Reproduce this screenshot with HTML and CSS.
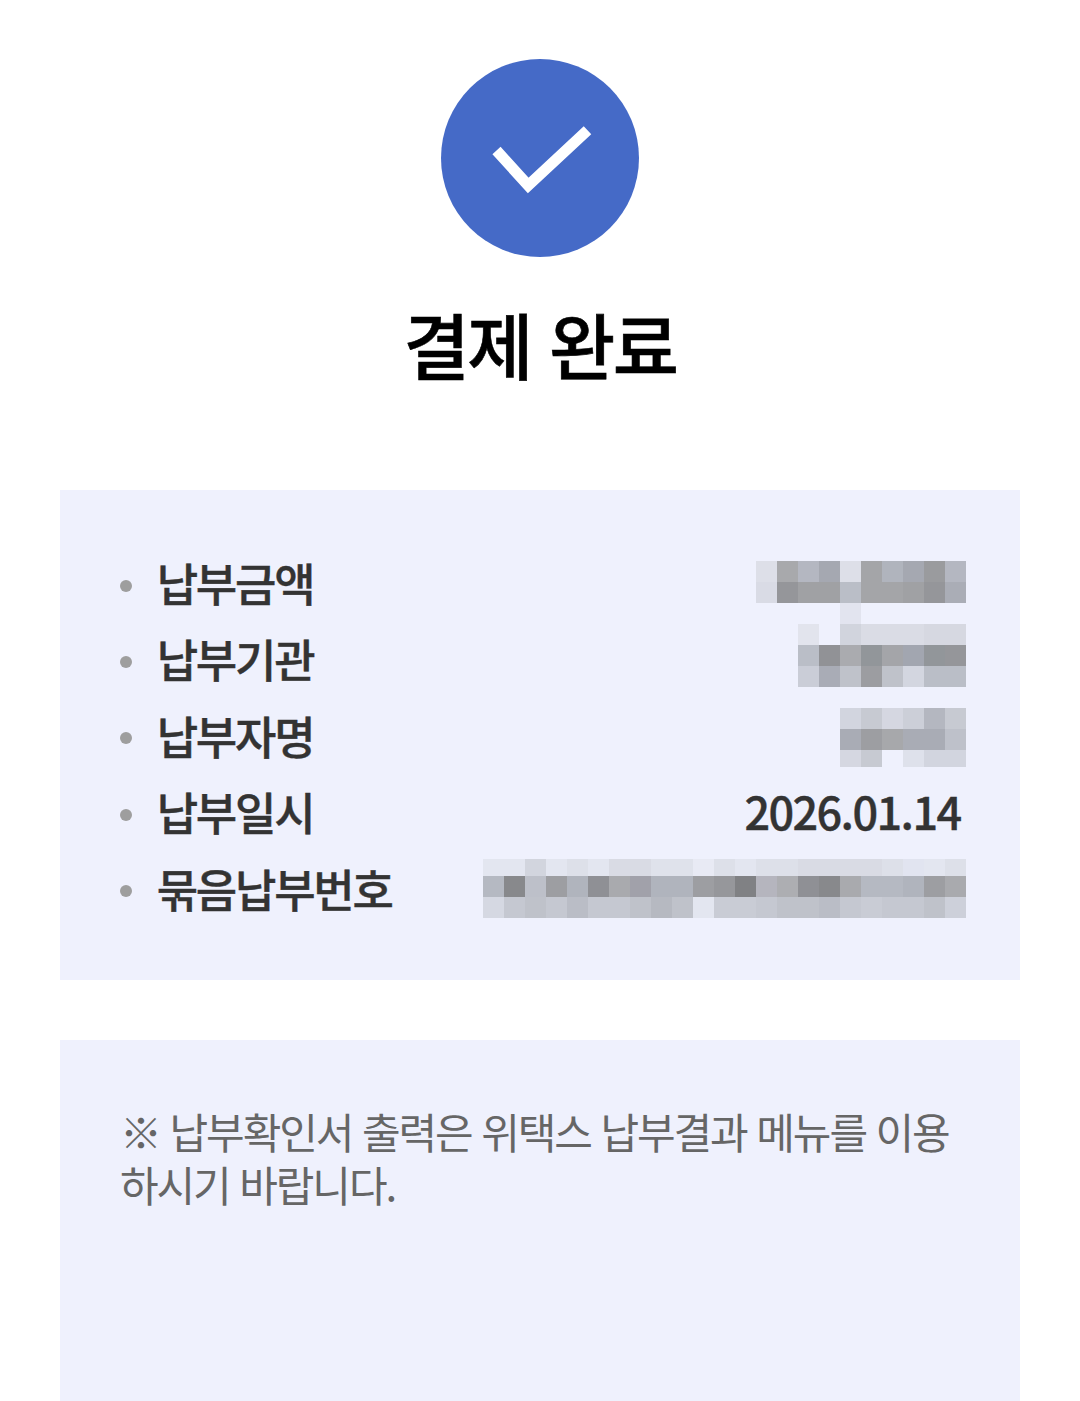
FILE: index.html
```html
<!DOCTYPE html>
<html lang="ko">
<head>
    <meta charset="utf-8">
    <title>결제 완료</title>
    <link rel="stylesheet" href="styles.css">
</head>
<body>
    <header class="result">
        <svg class="result-icon" width="198" height="198" viewBox="0 0 198 198">
            <circle cx="99" cy="99" r="99" fill="#456ac7"/>
            <path d="M55.5 91.5L87.2 126.5L146.5 71.3" fill="none" stroke="#fff" stroke-width="11"/>
        </svg>
        <h1>결제 완료</h1>
    </header>
    <section class="box">
        <ul class="pay-list">
            <li>
                <span class="label">납부금액</span>
                <svg class="mask amount" width="210" height="63" viewBox="0 0 10 3">
                    <path fill="#dddfe8" d="M0 0h1v1h-1zM4 0h1v1h-1z"/>
                    <path fill="#a8a9ac" d="M1 0h1v1h-1z"/>
                    <path fill="#b4b7c1" d="M2 0h1v1h-1zM9 0h1v1h-1z"/>
                    <path fill="#a5a8b1" d="M3 0h1v1h-1zM7 0h1v1h-1z"/>
                    <path fill="#a4a5a8" d="M5 0h1v2h-1zM6 1h1v1h-1z"/>
                    <path fill="#b0b4bd" d="M6 0h1v1h-1z"/>
                    <path fill="#9a9b9e" d="M8 0h1v1h-1z"/>
                    <path fill="#d9dbe5" d="M0 1h1v1h-1z"/>
                    <path fill="#95969a" d="M1 1h1v1h-1zM8 1h1v1h-1z"/>
                    <path fill="#a0a1a4" d="M2 1h2v1h-2zM7 1h1v1h-1z"/>
                    <path fill="#babec7" d="M4 1h1v1h-1z"/>
                    <path fill="#aaadb6" d="M9 1h1v1h-1z"/>
                    <path fill="#e2e4ef" d="M4 2h1v1h-1z"/>
                </svg>
            </li>
            <li>
                <span class="label">납부기관</span>
                <svg class="mask agency" width="168" height="63" viewBox="0 0 8 3">
                    <path fill="#e2e4ed" d="M0 0h1v1h-1z"/>
                    <path fill="#d1d4dd" d="M2 0h1v1h-1z"/>
                    <path fill="#dadce5" d="M3 0h3v1h-3z"/>
                    <path fill="#d6d8e1" d="M6 0h2v1h-2z"/>
                    <path fill="#babec7" d="M0 1h1v1h-1zM6 2h2v1h-2z"/>
                    <path fill="#919296" d="M1 1h1v1h-1z"/>
                    <path fill="#aaabaf" d="M2 1h1v1h-1z"/>
                    <path fill="#92969a" d="M3 1h1v1h-1zM6 1h1v1h-1z"/>
                    <path fill="#a4a5a9" d="M4 1h1v1h-1z"/>
                    <path fill="#a2a6b0" d="M5 1h1v1h-1z"/>
                    <path fill="#95969a" d="M7 1h1v1h-1z"/>
                    <path fill="#cacdd7" d="M0 2h1v1h-1z"/>
                    <path fill="#a9acb6" d="M1 2h1v1h-1z"/>
                    <path fill="#bfc2ca" d="M2 2h1v1h-1zM4 2h1v1h-1z"/>
                    <path fill="#9c9da1" d="M3 2h1v1h-1z"/>
                    <path fill="#d3d6e0" d="M5 2h1v1h-1z"/>
                </svg>
            </li>
            <li>
                <span class="label">납부자명</span>
                <svg class="mask payer" width="126" height="59" viewBox="0 0 126 59">
                    <path fill="#d2d5df" d="M0 0h21v21h-21zM84 42h42v17h-42z"/>
                    <path fill="#c7cad2" d="M21 0h21v21h-21zM105 0h21v21h-21zM21 42h21v17h-21z"/>
                    <path fill="#d5d7e1" d="M42 0h21v21h-21zM0 42h21v17h-21z"/>
                    <path fill="#cccfd8" d="M63 0h21v21h-21z"/>
                    <path fill="#b4b7c0" d="M84 0h21v21h-21z"/>
                    <path fill="#a9acb5" d="M0 21h21v21h-21zM63 21h42v21h-42z"/>
                    <path fill="#9d9ea2" d="M21 21h21v21h-21z"/>
                    <path fill="#a7a8ab" d="M42 21h21v21h-21z"/>
                    <path fill="#bec1ca" d="M105 21h21v21h-21z"/>
                    <path fill="#dee1eb" d="M63 42h21v17h-21z"/>
                </svg>
            </li>
            <li>
                <span class="label">납부일시</span>
                <span class="value">2026.01.14</span>
            </li>
            <li>
                <span class="label">묶음납부번호</span>
                <svg class="mask number" width="483" height="59" viewBox="0 0 483 59">
                    <!-- top -->
                    <path fill="#e3e6f0" d="M0 0h483v17h-483z"/>
                    <path fill="#d2d5de" d="M42 0h21v17h-21z"/>
                    <path fill="#dde0e9" d="M84 0h21v17h-21zM231 0h21v17h-21zM273 0h42v17h-42zM399 0h21v17h-21zM462 0h21v17h-21z"/>
                    <path fill="#d9dbe4" d="M126 0h42v17h-42zM315 0h84v17h-84z"/>
                    <path fill="#dfe2eb" d="M168 0h42v17h-42z"/>
                    <path fill="#e8eaf4" d="M210 0h21v17h-21z"/>
                    <path fill="#e1e4f0" d="M420 0h21v17h-21z"/>
                    <!-- middle -->
                    <path fill="#b5b9c2" d="M0 17h483v21h-483z"/>
                    <path fill="#88898c" d="M21 17h21v21h-21zM336 17h21v21h-21z"/>
                    <path fill="#bdc0c9" d="M42 17h21v21h-21z"/>
                    <path fill="#9d9ea2" d="M63 17h21v21h-21zM210 17h21v21h-21zM441 17h21v21h-21z"/>
                    <path fill="#b0b4bd" d="M84 17h21v21h-21zM168 17h42v21h-42zM420 17h21v21h-21z"/>
                    <path fill="#8f9095" d="M105 17h21v21h-21zM315 17h21v21h-21z"/>
                    <path fill="#a9aaae" d="M126 17h21v21h-21zM357 17h21v21h-21zM462 17h21v21h-21z"/>
                    <path fill="#a1a1aa" d="M147 17h21v21h-21z"/>
                    <path fill="#96979b" d="M231 17h21v21h-21z"/>
                    <path fill="#808184" d="M252 17h21v21h-21z"/>
                    <path fill="#b5b5be" d="M273 17h21v21h-21z"/>
                    <path fill="#adaeb2" d="M294 17h21v21h-21z"/>
                    <!-- bottom -->
                    <path fill="#c5c8d1" d="M0 38h483v21h-483z"/>
                    <path fill="#d5d8e2" d="M0 38h21v21h-21z"/>
                    <path fill="#bfc2ca" d="M42 38h21v21h-21zM147 38h21v21h-21zM189 38h21v21h-21zM294 38h42v21h-42zM441 38h21v21h-21z"/>
                    <path fill="#babdc6" d="M84 38h21v21h-21zM336 38h21v21h-21z"/>
                    <path fill="#b6b9c1" d="M168 38h21v21h-21z"/>
                    <path fill="#e3e6f0" d="M210 38h21v21h-21z"/>
                    <path fill="#c9ccd5" d="M231 38h42v21h-42zM378 38h21v21h-21z"/>
                    <path fill="#cdd0da" d="M462 38h21v21h-21z"/>
                </svg>
            </li>
        </ul>
    </section>
    <section class="box notice">
        <p>※ 납부확인서 출력은 위택스 납부결과 메뉴를 이용하시기 바랍니다.</p>
    </section>
</body>
</html>
```
FILE: styles.css
```css
* {
    box-sizing: border-box;
    margin: 0;
    padding: 0;
    letter-spacing: -0.05em;
}
body {
    width: 1080px;
    height: 1401px;
    padding: 0 60px;
    overflow: hidden;
    background: #fff;
    font-family: "Noto Sans CJK KR", sans-serif;
}
.result {
    height: 490px;
    padding-top: 59px;
    text-align: center;
}
.result-icon {
    display: block;
    margin: 0 auto 32px;
}
h1 {
    font-size: 72px;
    font-weight: 500;
    line-height: 108px;
    letter-spacing: -2.4px;
    color: #000;
    -webkit-text-stroke: 0.6px #000;
}
.box {
    height: 490px;
    padding: 60px;
    background: #eff1fd;
}
.pay-list {
    display: grid;
    grid-auto-rows: 64px;
    row-gap: 12.4px;
    list-style: none;
}
.pay-list li {
    display: flex;
    justify-content: space-between;
    align-items: flex-start;
    font-size: 45px;
    font-weight: 500;
    line-height: 65px;
    color: #333;
    -webkit-text-stroke: 0.4px #333;
}
.label {
    display: flex;
    align-items: center;
}
.label::before {
    content: "";
    width: 12px;
    height: 12px;
    margin: 6px 24.7px 0 0;
    border-radius: 50%;
    background: #9e9e9e;
}
.value {
    margin: -1px -0.5px 0 0;
    letter-spacing: -1.6px;
}
/* blocked out values */
.mask {
    flex: none;
    margin-right: -6px;
    shape-rendering: crispEdges;
    -webkit-text-stroke: 0;
}
.amount {
    margin-top: 11px;
}
.agency {
    margin-top: -2.4px;
}
.payer {
    margin-top: 5.2px;
}
.number {
    margin-top: 3.4px;
}
.notice {
    height: 361px;
    margin-top: 60px;
}
.notice p {
    padding-top: 5px;
    font-size: 42px;
    line-height: 52.5px;
    color: #666;
    word-break: break-all;
}
```
